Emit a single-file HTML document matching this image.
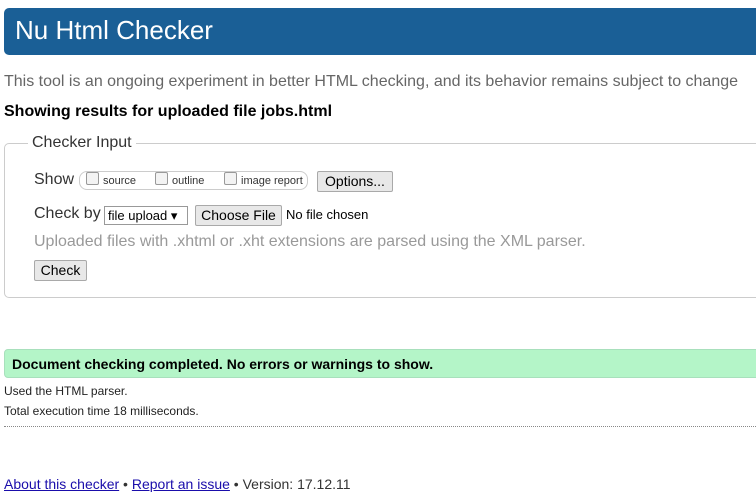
<!DOCTYPE html><html><head><style>
body{margin:0;width:756px;height:498px;overflow:hidden;background:#fff;font-family:"Liberation Sans",Arial,sans-serif;position:relative;color:#000}
.a{position:absolute;white-space:nowrap}
.btn{position:absolute;background:#e8e8e8;border:1px solid #a9a9a9;border-radius:2px;font-size:14px;box-sizing:border-box;text-align:center}
.cb{display:inline-block;width:11px;height:11px;border:1px solid #999;border-radius:2px;background:#f3f3f3;vertical-align:-1px;margin-right:4px}
a{color:#1a0dab}
</style></head><body>
<div class="a" style="left:4px;top:8px;width:752px;height:47px;background:#1a5f96;border-radius:5px 0 0 5px"></div>
<div class="a" style="left:15px;top:15px;font-size:26px;color:#fff">Nu Html Checker</div>
<div class="a" style="left:4px;top:73px;font-size:16px;color:#666">This tool is an ongoing experiment in better HTML checking, and its behavior remains subject to change</div>
<div class="a" style="left:4px;top:103px;font-size:16px;font-weight:bold">Showing results for uploaded file jobs.html</div>
<div class="a" style="left:4px;top:143px;width:760px;height:155px;border:1px solid #ccc;border-radius:5px;box-sizing:border-box"></div>
<div class="a" style="left:28px;top:134px;font-size:16px;background:#fff;padding:0 4px;color:#333">Checker Input</div>
<div class="a" style="left:34px;top:171px;font-size:16px;color:#333">Show</div>
<div class="a" style="left:79px;top:171px;width:227px;height:17px;border:1px solid #ccc;border-radius:8px;font-size:11px;line-height:17px;color:#333">
<span style="position:absolute;left:6px"><span class="cb"></span>source</span>
<span style="position:absolute;left:75px"><span class="cb"></span>outline</span>
<span style="position:absolute;left:144px"><span class="cb"></span>image report</span></div>
<div class="btn" style="left:317px;top:171px;width:76px;height:21px;line-height:19px">Options...</div>
<div class="a" style="left:34px;top:205px;font-size:16px;color:#333">Check by</div>
<div class="a" style="left:104px;top:206px;width:84px;height:19px;border:1px solid #999;box-sizing:border-box;font-size:13px;line-height:17px;padding-left:3px">file upload ▾</div>
<div class="btn" style="left:195px;top:205px;width:87px;height:21px;line-height:19px">Choose File</div>
<div class="a" style="left:286px;top:207px;font-size:13px">No file chosen</div>
<div class="a" style="left:34px;top:233px;font-size:16px;color:#999">Uploaded files with .xhtml or .xht extensions are parsed using the XML parser.</div>
<div class="btn" style="left:34px;top:260px;width:53px;height:21px;line-height:19px">Check</div>
<div class="a" style="left:4px;top:349px;width:760px;height:29px;background:#b4f5c8;border:1px solid #a8e0bc;border-radius:4px;box-sizing:border-box"></div>
<div class="a" style="left:12px;top:356px;font-size:14px;font-weight:bold">Document checking completed. No errors or warnings to show.</div>
<div class="a" style="left:4px;top:384px;font-size:12px;color:#222">Used the HTML parser.</div>
<div class="a" style="left:4px;top:404px;font-size:12px;color:#222">Total execution time 18 milliseconds.</div>
<div class="a" style="left:4px;top:426px;width:752px;border-top:1px dotted #888"></div>
<div class="a" style="left:4px;top:476px;font-size:14px;color:#333"><a href="#">About this checker</a> • <a href="#">Report an issue</a> • Version: 17.12.11</div>
</body></html>
